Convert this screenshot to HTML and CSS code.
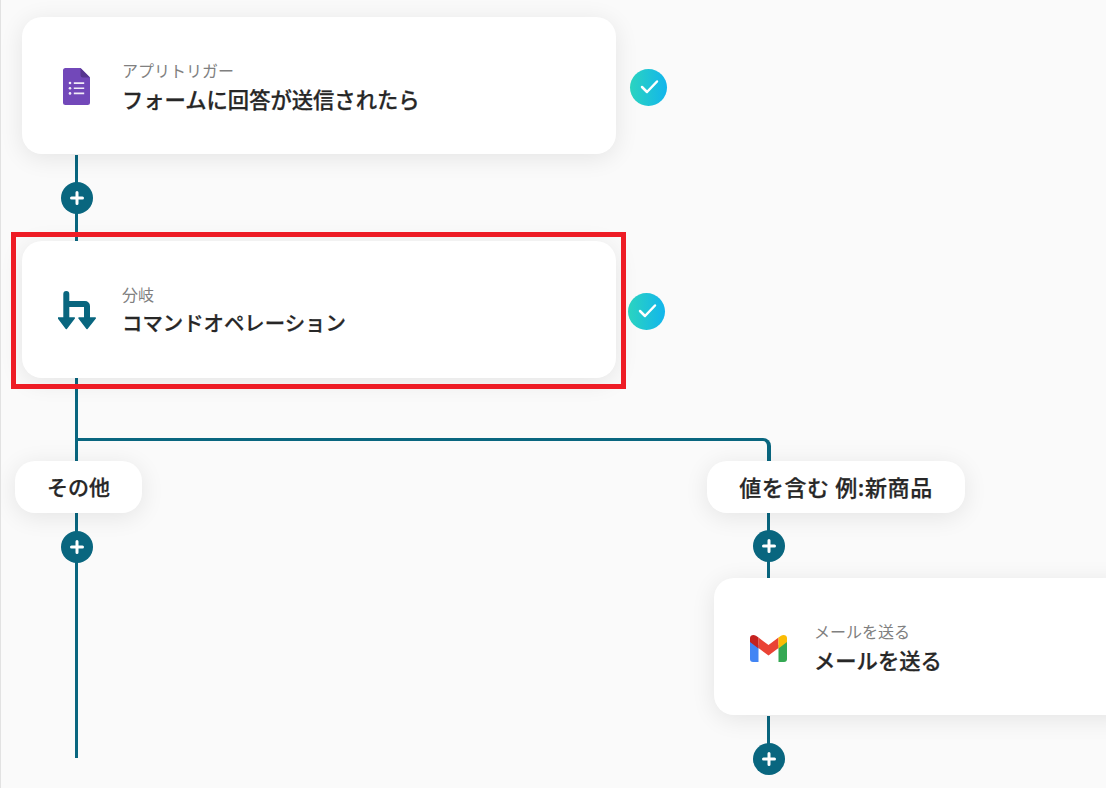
FILE: index.html
```html
<!DOCTYPE html>
<html lang="ja">
<head>
  <meta charset="UTF-8" />
  <meta name="viewport" content="width=device-width,initial-scale=1.0" />
  <title>フロー</title>
  <link rel="stylesheet" href="styles.css">
</head>
<body>
  <main class="canvas">
    <!-- connectors -->
    <div class="line line-main"></div>
    <div class="line line-right-a"></div>
    <div class="line line-right-b"></div>
    <div class="branch-line"></div>

    <!-- step 1 -->
    <section class="card card-trigger">
      <svg class="icon icon-forms" viewBox="0 0 27 37">
        <path d="M2.500 0H17.500L27 9.500V34.500a2.500 2.500 0 0 1-2.500 2.500h-22A2.500 2.500 0 0 1 0 34.500V2.500A2.500 2.500 0 0 1 2.500 0z" fill="#7248b9"/>
        <path d="M17.500 0L27 9.500h-7A2.500 2.500 0 0 1 17.500 7z" fill="#56358f"/>
        <path d="M10.800 14.200h10.400v1.700H10.800zM10.800 19.400h10.400v1.700H10.800zM10.800 24.600h10.400v1.700H10.800z" fill="#f1ecf8"/>
        <circle cx="7" cy="15" r="1.300" fill="#f1ecf8"/>
        <circle cx="7" cy="20.200" r="1.300" fill="#f1ecf8"/>
        <circle cx="7" cy="25.400" r="1.300" fill="#f1ecf8"/>
      </svg>
      <div class="card-text">
        <div class="card-label">アプリトリガー</div>
        <div class="card-title">フォームに回答が送信されたら</div>
      </div>
    </section>
    <div class="check check-1"><svg viewBox="0 0 37 37"><path d="M12 18l5 5 10-10.500" /></svg></div>
    <button class="add add-1"><svg viewBox="0 0 32 32"><path d="M16 10.500v11M10.500 16h11" /></svg></button>

    <!-- step 2 -->
    <section class="card card-branch">
      <svg class="icon icon-branch" viewBox="0 0 38 39">
        <path d="M8.300 3v24M8.300 13H27a2 2 0 0 1 2 2v12" fill="none" stroke="#09667f" stroke-width="6" stroke-linecap="round"/>
        <path d="M.3 27H16.300L8.300 37.500zM21 27H37.300L29 37.500z" fill="#09667f" stroke="#09667f" stroke-width="1.500" stroke-linejoin="round"/>
      </svg>
      <div class="card-text">
        <div class="card-label">分岐</div>
        <div class="card-title">コマンドオペレーション</div>
      </div>
    </section>
    <div class="check check-2"><svg viewBox="0 0 37 37"><path d="M12 18l5 5 10-10.500" /></svg></div>
    <div class="highlight"></div>

    <!-- branches -->
    <div class="pill pill-other">その他</div>
    <button class="add add-2"><svg viewBox="0 0 32 32"><path d="M16 10.500v11M10.500 16h11" /></svg></button>
    <div class="pill pill-value">値を含む 例:新商品</div>
    <button class="add add-3"><svg viewBox="0 0 32 32"><path d="M16 10.500v11M10.500 16h11" /></svg></button>

    <!-- step 3 -->
    <section class="card card-mail">
      <svg class="icon icon-gmail" viewBox="0 0 37 28">
        <path d="M0 7v18a3 3 0 0 0 3 3h5.500V11z" fill="#4285f4"/>
        <path d="M37 7v18a3 3 0 0 1-3 3h-5.500V11z" fill="#34a853"/>
        <path d="M8.500 3.500L18.500 11l10-7.500V14l-10 7.500L8.500 14z" fill="#ea4335"/>
        <path d="M0 4v4L8.500 14.500V3.500L6 1.800C3.300-.2 0 1.300 0 4z" fill="#c5221f"/>
        <path d="M37 4v4L28.500 14.500V3.500L31 1.800C33.700-.2 37 1.300 37 4z" fill="#fbbc04"/>
      </svg>
      <div class="card-text">
        <div class="card-label">メールを送る</div>
        <div class="card-title">メールを送る</div>
      </div>
    </section>
    <button class="add add-4"><svg viewBox="0 0 32 32"><path d="M16 10.500v11M10.500 16h11" /></svg></button>
  </main>
</body>
</html>
```

FILE: styles.css
```css
:root {
  --bg:#fafafa;
  --teal:#09667f;
  --text:#272727;
  --muted:#808080;
  --card-shadow:0 4px 24px rgba(0,0,0,.09);
}
*{box-sizing:border-box;margin:0;padding:0}
html,body{height:100%;overflow:hidden}
body{font-family:"Noto Sans CJK JP","Noto Sans",sans-serif;background:var(--bg);color:var(--text)}

/* free canvas: every node sits at its own place on the diagram */
.canvas{position:relative;width:1106px;height:788px;overflow:hidden;border-left:1px solid #e2e2e2}
.canvas>*{position:absolute}

/* connectors */
.line{width:3px;background:var(--teal)}
.line-main{left:74px;top:155px;height:603px}
.line-right-a{left:766px;top:513px;height:65px}
.line-right-b{left:766px;top:716px;height:30px}
.branch-line{left:77px;top:438px;width:693px;height:24px;border-top:3px solid var(--teal);border-right:4px solid var(--teal);border-top-right-radius:8px}

/* cards */
.card{display:flex;align-items:center;height:137px;background:#fff;border-radius:20px;box-shadow:var(--card-shadow)}
.card-trigger{left:21px;top:17px;width:594px}
.card-branch{left:21px;top:241px;width:594px}
.card-mail{left:713px;top:578px;width:420px}
.card-text{position:absolute;left:100px;top:41px}
.card-label{font-size:16px;line-height:24px;color:var(--muted)}
.card-title{font-size:21.300px;line-height:32px;font-weight:500;-webkit-text-stroke:.25px var(--text);color:var(--text);margin-top:1px}
.card-branch .card-title{font-size:20.400px;margin-top:0}
.icon{position:absolute;display:block}
.icon-forms{left:41px;top:51px;width:27px;height:37px}
.icon-branch{left:36px;top:50px;width:38px;height:39px}
.icon-gmail{left:36px;top:56px;width:37px;height:28px}

/* round buttons */
.add{width:32px;height:32px;border:none;border-radius:50%;background:var(--teal)}
.add svg{display:block;width:32px;height:32px}
.add path{fill:none;stroke:#fff;stroke-width:3;stroke-linecap:round}
.add-1{left:60px;top:182px}
.add-2{left:60px;top:531px}
.add-3{left:752px;top:530px}
.add-4{left:752px;top:743px}

.check{width:37px;height:37px;border-radius:50%;background:linear-gradient(90deg,#2bd4bf,#12b5ec)}
.check svg{display:block;width:37px;height:37px}
.check path{fill:none;stroke:#fff;stroke-width:2.500;stroke-linecap:round;stroke-linejoin:round}
.check-1{left:629px;top:69px}
.check-2{left:627px;top:293px}

/* branch labels */
.pill{display:flex;align-items:center;justify-content:center;height:52px;padding-bottom:2px;background:#fff;border-radius:20px;box-shadow:var(--card-shadow);font-size:21px;font-weight:500;-webkit-text-stroke:.25px var(--text);color:var(--text)}
.pill-other{left:14px;top:461px;width:127px}
.pill-value{left:706px;top:461px;width:258px;font-size:22px;letter-spacing:.6px}

.highlight{left:10px;top:232px;width:615px;height:157px;border:5px solid #ee1c25}
```
